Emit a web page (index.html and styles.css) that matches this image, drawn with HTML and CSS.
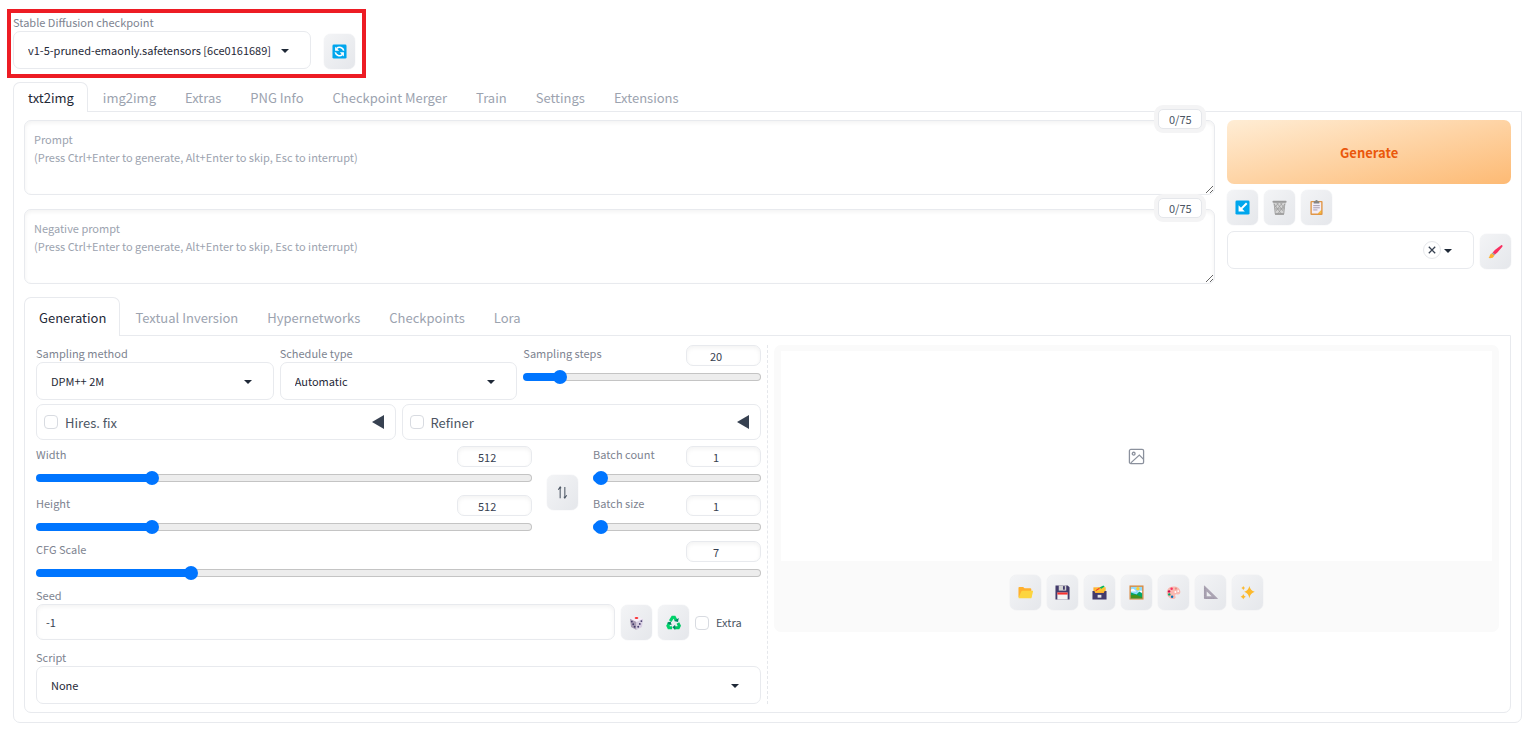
FILE: index.html
```html
<!DOCTYPE html>
<html lang="en">
<head>
    <meta charset="UTF-8">
    <meta name="viewport" content="width=device-width, initial-scale=1.0">
    <title>Stable Diffusion</title>
    <link rel="stylesheet" href="styles.css">
</head>
<body>
    <div class="quicksettings">
        <div class="field checkpoint">
            <label for="checkpoint">Stable Diffusion checkpoint</label>
            <div class="dropdown">
                <select id="checkpoint"><option>v1-5-pruned-emaonly.safetensors [6ce0161689]</option></select>
            </div>
        </div>
        <button class="tool" aria-label="Refresh">
            <svg viewBox="0 0 16 16"><rect x="0.5" y="0.5" width="15" height="15" rx="1.5" fill="#00a6ed"/><path d="M12.5 7A4.6 4.6 0 0 0 5 4.6M3.5 9a4.6 4.6 0 0 0 7.5 2.4" fill="none" stroke="#fff" stroke-width="1.7"/><path d="M3.3 2.8v4.4h4.4zM12.7 13.200V8.8H8.3z" fill="#fff"/></svg>
        </button>
    </div>

    <div class="app">
        <nav class="tabs">
            <button class="tab selected">txt2img</button>
            <button class="tab">img2img</button>
            <button class="tab">Extras</button>
            <button class="tab">PNG Info</button>
            <button class="tab">Checkpoint Merger</button>
            <button class="tab">Train</button>
            <button class="tab">Settings</button>
            <button class="tab">Extensions</button>
        </nav>

        <main class="panel">
            <div class="toprow">
                <div class="prompts">
                    <div class="prompt">
                        <textarea aria-label="Prompt" placeholder="Prompt&#10;(Press Ctrl+Enter to generate, Alt+Enter to skip, Esc to interrupt)"></textarea>
                        <span class="counter">0/75</span>
                    </div>
                    <div class="prompt">
                        <textarea aria-label="Negative prompt" placeholder="Negative prompt&#10;(Press Ctrl+Enter to generate, Alt+Enter to skip, Esc to interrupt)"></textarea>
                        <span class="counter">0/75</span>
                    </div>
                </div>
                <div class="actions">
                    <button class="generate">Generate</button>
                    <div class="tools">
                        <button class="tool" aria-label="Read generation parameters">
                            <svg viewBox="0 0 16 16"><rect x="0.5" y="0.5" width="15" height="15" rx="1.5" fill="#00a6ed"/><path d="M12.5 3.5L6 10" stroke="#fff" stroke-width="2.2"/><path d="M3.8 5.5v6.7h6.7z" fill="#fff"/></svg>
                        </button>
                        <button class="tool" aria-label="Clear prompt">
                            <svg viewBox="0 0 16 16"><path d="M1.5 2h13l-1.7 13.5H3.2z" fill="#d3d3d3"/><path d="M2 4l8 11M5 3l7 9M9 3l4 6M14 4L6 15M11 3l-7 9M7 3L3 8M2.3 4l1.2 11h9l1.2-11M3 9.5h10" fill="none" stroke="#9b9b9b" stroke-width="0.8"/><rect x="0.5" y="0.8" width="15" height="2.2" rx="0.8" fill="#9b9b9b"/><rect x="3.2" y="14" width="9.6" height="1.7" rx="0.6" fill="#9b9b9b"/></svg>
                        </button>
                        <button class="tool" aria-label="Apply style">
                            <svg viewBox="0 0 16 16"><rect x="1.5" y="1" width="13" height="15" rx="1" fill="#e19747"/><path d="M3 2.5h10V11l-3.500 3.500H3z" fill="#f3eef8"/><path d="M13 11v3.500H9.500z" fill="#f9c23c"/><path d="M4.500 6h7M4.500 8.300h7M4.500 10.600h4.500" stroke="#998ea4" stroke-width="0.9"/><path d="M5 1.300h1.700a1.300 1.300 0 0 1 2.600 0H11v2.500H5z" fill="#858585"/></svg>
                        </button>
                    </div>
                    <div class="styles-row">
                        <div class="dropdown">
                            <select aria-label="Styles"><option></option></select>
                            <button class="clear" aria-label="Clear styles"><svg viewBox="0 0 10 10"><path d="M1 1l8 8M9 1L1 9" stroke="#374151" stroke-width="1.6"/></svg></button>
                        </div>
                        <button class="tool" aria-label="Edit styles">
                            <svg viewBox="0 0 16 16"><path d="M14 1.200L7.300 6.500 5 9l2.500 2.200L10 9l5.500-6.300q.3-1.600-1.500-1.500z" fill="#f92f60"/><path d="M5 9l2.500 2.200-1 1.200-2.600-2.300z" fill="#9b9b9b"/><path d="M4 10l2.600 2.400c-.6 2.200-3 3-6 2.600 1.400-1 1-4.600 3.400-5z" fill="#ffb02e"/></svg>
                        </button>
                    </div>
                </div>
            </div>

            <nav class="tabs subtabs">
                <button class="tab selected">Generation</button>
                <button class="tab">Textual Inversion</button>
                <button class="tab">Hypernetworks</button>
                <button class="tab">Checkpoints</button>
                <button class="tab">Lora</button>
            </nav>

            <section class="panel generation">
                <div class="settings">
                    <div class="sampler">
                        <div class="field">
                            <label for="sampler">Sampling method</label>
                            <div class="dropdown"><select id="sampler"><option>DPM++ 2M</option></select></div>
                        </div>
                        <div class="field">
                            <label for="schedule">Schedule type</label>
                            <div class="dropdown"><select id="schedule"><option>Automatic</option></select></div>
                        </div>
                        <div class="slider">
                            <div class="head"><label for="steps">Sampling steps</label><input type="number" aria-label="Sampling steps value" value="20"></div>
                            <input type="range" id="steps" min="1" max="150" value="20" style="--value: 0.1275">
                        </div>
                    </div>

                    <div class="accordions">
                        <div class="accordion">
                            <input type="checkbox" id="hires"><label for="hires">Hires. fix</label>
                            <button aria-label="Expand Hires. fix"><svg viewBox="0 0 12 14"><path d="M12 0v14L0 7z" fill="#374151"/></svg></button>
                        </div>
                        <div class="accordion">
                            <input type="checkbox" id="refiner"><label for="refiner">Refiner</label>
                            <button aria-label="Expand Refiner"><svg viewBox="0 0 12 14"><path d="M12 0v14L0 7z" fill="#374151"/></svg></button>
                        </div>
                    </div>

                    <div class="dimensions">
                        <div class="sliders size">
                            <div class="slider">
                                <div class="head"><label for="width">Width</label><input type="number" aria-label="Width value" value="512"></div>
                                <input type="range" id="width" min="64" max="2048" value="512" style="--value: 0.2258">
                            </div>
                            <div class="slider">
                                <div class="head"><label for="height">Height</label><input type="number" aria-label="Height value" value="512"></div>
                                <input type="range" id="height" min="64" max="2048" value="512" style="--value: 0.2258">
                            </div>
                        </div>
                        <button class="tool" aria-label="Switch width and height">
                            <svg viewBox="0 0 16 16"><path d="M5.500 14V2.500M3.500 5l2-3 1 1.500M10.500 2v11.500M12.500 11l-2 3-1-1.500" fill="none" stroke="#4b5563" stroke-width="1.1"/></svg>
                        </button>
                        <div class="sliders batch">
                            <div class="slider">
                                <div class="head"><label for="count">Batch count</label><input type="number" aria-label="Batch count value" value="1"></div>
                                <input type="range" id="count" min="1" max="100" value="1" style="--value: 0">
                            </div>
                            <div class="slider">
                                <div class="head"><label for="batch">Batch size</label><input type="number" aria-label="Batch size value" value="1"></div>
                                <input type="range" id="batch" min="1" max="8" value="1" style="--value: 0">
                            </div>
                        </div>
                    </div>

                    <div class="slider cfg">
                        <div class="head"><label for="cfg">CFG Scale</label><input type="number" aria-label="CFG Scale value" value="7"></div>
                        <input type="range" id="cfg" min="1" max="30" value="7" style="--value: 0.2069">
                    </div>

                    <div class="seed-row">
                        <div class="field">
                            <label for="seed">Seed</label>
                            <input type="text" id="seed" value="-1">
                        </div>
                        <button class="tool" aria-label="Random seed">
                            <svg viewBox="0 0 16 16"><path d="M1 4l7-3 7 3-7 3.500z" fill="#f4eef8"/><path d="M1 4l7 3.500V16l-5.800-3.200z" fill="#a99bb3"/><path d="M15 4L8 7.500V16l5.800-3.200z" fill="#d9cfe3"/><ellipse cx="8" cy="3.2" rx="2" ry="1" fill="#f8312f"/><g fill="#433b6b"><circle cx="3" cy="7" r="1"/><circle cx="6" cy="12.5" r="1"/><circle cx="4.5" cy="9.8" r="1"/><circle cx="13.2" cy="6.5" r="1"/><circle cx="11.5" cy="9.5" r="1"/><circle cx="9.8" cy="12.5" r="1"/></g></svg>
                        </button>
                        <button class="tool" aria-label="Reuse seed">
                            <svg viewBox="0 0 16 16"><g fill="none" stroke-width="3.2"><path d="M4.500 6.500L7 2.500h2L11 6" stroke="#00d26a"/><path d="M12.700 8.500l1.500 3-1 2H9" stroke="#00c563"/><path d="M6.500 13.500H3l-1-2 2-3.500" stroke="#00d26a"/></g><path d="M8.500 6.500l4.300 1 .8-4.300z" fill="#008463"/><path d="M9.800 10.300v5.700L6.800 13z" fill="#008463"/><path d="M.8 8.500L5 6.800l1 4z" fill="#008463"/></svg>
                        </button>
                        <div class="extra"><input type="checkbox" id="extra"><label for="extra">Extra</label></div>
                    </div>

                    <div class="field script">
                        <label for="script">Script</label>
                        <div class="dropdown"><select id="script"><option>None</option></select></div>
                    </div>
                </div>

                <div class="divider"></div>

                <div class="results">
                    <div class="gallery">
                        <div class="preview">
                            <svg viewBox="0 0 24 24" fill="none" stroke="#8b919d" stroke-width="1.8"><rect x="2" y="2" width="20" height="20" rx="2"/><circle cx="8" cy="8" r="2"/><path d="M4 21L16 10l6 6"/></svg>
                        </div>
                        <div class="tools">
                            <button class="tool" aria-label="Open output directory">
                                <svg viewBox="0 0 16 16"><path d="M.5 3q0-1 1-1h4L7 3.500h6q1.200 0 1.200 1.200V13H.5z" fill="#ffb02e"/><path d="M5 6h10.500q.7 0 .5.800l-1.500 6.500q-.2.900-1.200.9H1.500q-1 0-.8-.8L3.500 7q.3-1 1.500-1z" fill="#fcd53f"/></svg>
                            </button>
                            <button class="tool" aria-label="Save image">
                                <svg viewBox="0 0 16 16"><path d="M.5.500h13l2 2v13H.5z" fill="#433b6b"/><path d="M4 .5h8V6H4z" fill="#d3d3d3"/><path d="M8.500 1.200h2V5h-2z" fill="#433b6b"/><path d="M2.500 8h11v7.500h-11z" fill="#f4f4f4"/><path d="M2.500 8h11v2.200h-11z" fill="#f8312f"/></svg>
                            </button>
                            <button class="tool" aria-label="Save zip archive">
                                <svg viewBox="0 0 16 16"><path d="M1.500 2.500h13V9h-13z" fill="#ffb02e"/><path d="M3 4l7-2.500 4 1.500v4H3z" fill="#fcc331"/><path d="M4 6l4-2.500" stroke="#f8312f" stroke-width="1.200"/><path d="M8 3l4-2.500 1.500 1L10 4z" fill="#00b864"/><path d="M.5 6.500h2l1 2h9l1-2h2v9H.5z" fill="#433b6b"/><path d="M6 10.500h4v3H6z" fill="#e6e6e6"/></svg>
                            </button>
                            <button class="tool" aria-label="Send to img2img">
                                <svg viewBox="0 0 16 16"><rect x="0.5" y="0.5" width="15" height="15" fill="#d98c45"/><rect x="2" y="2" width="12" height="12" fill="#8fdcff"/><circle cx="9.5" cy="4" r="1.8" fill="#ffcf2e"/><path d="M2 5q2-2 4 0l2 2H2zM11 6h3v2h-5z" fill="#fff"/><path d="M2 8l3 1 3 1 3-3 3 2v5H2z" fill="#00a66a"/><path d="M2 11l5-1 7 3v1H2z" fill="#44911b"/></svg>
                            </button>
                            <button class="tool" aria-label="Send to inpaint">
                                <svg viewBox="0 0 16 16"><path d="M8 1.500C3.500 1.500.8 4.500.8 8s3 7 7 7c2.500 0 3-1.700 2.200-3-.8-1.500.5-2.500 2-2 2 .5 3.500-.7 3.300-3C15 3.500 12 1.500 8 1.500z" fill="#f9b8b0"/><circle cx="10" cy="7.5" r="1" fill="#fff"/><circle cx="6" cy="4" r="1.300" fill="#f92f60"/><circle cx="3.300" cy="6.800" r="1.300" fill="#ca0b4a"/><circle cx="3.500" cy="10" r="1.300" fill="#00a66a"/><circle cx="6.500" cy="12.500" r="1.300" fill="#0074ba"/><circle cx="10.500" cy="3.800" r="1.200" fill="#e58d80"/><circle cx="13" cy="6.500" r="1" fill="#fff"/></svg>
                            </button>
                            <button class="tool" aria-label="Send to extras">
                                <svg viewBox="0 0 16 16"><path d="M1 .8q0-.8.800 0L15.500 14q.8 1-.3 1H1.800Q1 15 1 14.200zM4 7v5h5.300z" fill="#aba4b3" fill-rule="evenodd"/><path d="M2 3v11h11" fill="none" stroke="#8d8499" stroke-width="0.7" stroke-dasharray="1 1"/></svg>
                            </button>
                            <button class="tool" aria-label="Upscale">
                                <svg viewBox="0 0 16 16" fill="#fcb92c"><path d="M10 1q1 4.800 5.700 6.300Q11 8.700 10 14q-1-5.300-5.500-6.700Q9 5.800 10 1zM3.500 1q.4 1.700 2 2.300-1.600.5-2 2.200-.5-1.700-2-2.200Q3 2.700 3.500 1zM3.500 9.500q.5 2.200 2.700 2.900-2.200.6-2.700 2.900-.5-2.300-2.800-2.900Q3 11.700 3.500 9.500z"/></svg>
                            </button>
                        </div>
                    </div>
                </div>
            </section>
        </main>
    </div>
</body>
</html>
```
FILE: styles.css
```css
* {
    box-sizing: border-box;
}

body {
    margin: 0;
    padding: 9px 14px 8px 7px;
    background-color: #fff;
    color: #374151;
    font-family: "Noto Sans CJK SC", "Open Sans", sans-serif;
    font-size: 11px;
    line-height: 17px;
}

button, input, select, textarea {
    margin: 0;
    font: inherit;
    color: inherit;
}

button {
    padding: 0;
    border: none;
    background: none;
    cursor: pointer;
}

svg {
    display: block;
}

label {
    color: #7d8390;
}

.quicksettings {
    display: flex;
    align-items: flex-end;
    gap: 13px;
    width: fit-content;
    padding: 1px 7px 5px 2px;
    border: 4px solid #ed1c24;
}

.field {
    display: flex;
    flex-direction: column;
    min-width: 0;
}

.checkpoint {
    width: 298px;
}

.dropdown {
    position: relative;
}

.dropdown select {
    display: block;
    width: 100%;
    height: 38px;
    padding: 0 36px 0 14px;
    border: 1px solid #e8eaee;
    border-radius: 7px;
    background-color: #fff;
    appearance: none;
    color: #1f2937;
}

.checkpoint select {
    padding-right: 24px;
}

.dropdown::after {
    content: "";
    position: absolute;
    top: 18px;
    right: 22px;
    border: 4px solid transparent;
    border-top-color: #1f2937;
    border-bottom: none;
    pointer-events: none;
}

.tool {
    display: flex;
    flex: none;
    align-items: center;
    justify-content: center;
    width: 31px;
    height: 35px;
    border-radius: 7px;
    background: linear-gradient(to bottom right, #f3f4f6, #e5e7eb);
    box-shadow: 0 0 1px #d1d5db;
}

.tool svg {
    width: 15px;
    height: 15px;
}

.app {
    margin: 4px 0 0 6px;
}

.tabs {
    display: flex;
    position: relative;
    z-index: 1;
}

.tab {
    height: 30px;
    margin-bottom: -1px;
    padding: 0 13px 0 14px;
    border: 1px solid transparent;
    border-bottom: none;
    border-radius: 7px 7px 0 0;
    color: #9ca3af;
    font-size: 13px;
}

.tab.selected {
    border-color: #e8eaee;
    background-color: #fff;
    color: #1f2937;
}

.panel {
    padding: 8px 10px 9px;
    border: 1px solid #e8eaee;
    border-radius: 0 0 7px 7px;
}

.toprow {
    display: grid;
    grid-template-columns: 21fr 5fr;
    gap: 12px;
}

.prompts {
    display: flex;
    flex-direction: column;
    gap: 14px;
}

.prompt {
    position: relative;
}

.prompt textarea {
    display: block;
    width: 100%;
    height: 75px;
    padding: 9px;
    border: 1px solid #e8eaee;
    border-radius: 7px;
    box-shadow: inset 0 2px 4px rgba(0, 0, 0, 0.05);
    line-height: 18px;
    resize: vertical;
}

.prompt textarea::placeholder {
    color: #9ca3af;
}

.counter {
    position: absolute;
    top: -11px;
    right: 13px;
    width: 44px;
    border: 1px solid #e5e7eb;
    border-radius: 5px;
    background-color: #fff;
    box-shadow: 0 0 0 4px #f4f4f5;
    color: #4b5563;
    line-height: 18px;
    text-align: center;
}

.actions {
    display: flex;
    flex-direction: column;
    gap: 6px;
}

.generate {
    height: 64px;
    border-radius: 7px;
    background: linear-gradient(to bottom right, #ffedd5, #fdba74);
    color: #ea580c;
    font-size: 13px;
    font-weight: 600;
}

.tools {
    display: flex;
    gap: 6px;
}

.styles-row {
    display: flex;
    align-items: flex-end;
    gap: 6px;
}

.styles-row .dropdown {
    flex: 1;
}

.clear {
    display: flex;
    position: absolute;
    top: 10px;
    right: 33px;
    align-items: center;
    justify-content: center;
    width: 18px;
    height: 18px;
    border: 1px solid #e5e7eb;
    border-radius: 50%;
}

.clear svg {
    width: 8px;
    height: 8px;
}

.subtabs {
    margin-top: 13px;
}

.subtabs .tab {
    height: 39px;
}

.generation {
    display: flex;
    gap: 6px;
    padding: 9px 11px 8px;
}

.settings, .results {
    flex: 1;
    min-width: 0;
}

.divider {
    border-left: 1px dashed #e5e7eb;
}

.sampler {
    display: grid;
    grid-template-columns: 1fr 1fr 1fr;
    gap: 6px;
}

.slider .head {
    display: flex;
    justify-content: space-between;
}

.slider input[type="number"] {
    width: 75px;
    height: 21px;
    padding: 0 6px;
    border: 1px solid #e8eaee;
    border-radius: 7px;
    box-shadow: inset 0 2px 4px rgba(0, 0, 0, 0.05);
    text-align: center;
}

.slider input[type="range"] {
    display: block;
    width: 100%;
    height: 14px;
    margin-top: 4px;
    appearance: none;
    background: none;
}

.slider input[type="range"]::-webkit-slider-runnable-track {
    height: 8px;
    border: 1px solid transparent;
    border-radius: 4px;
    background:
        linear-gradient(#0075ff, #0075ff) 0 0 / calc(7px + (100% - 14px) * var(--value)) 100% no-repeat border-box,
        linear-gradient(#ededed, #ededed) padding-box,
        linear-gradient(#c4c4c4, #c4c4c4) border-box;
}

.slider input[type="range"]::-webkit-slider-thumb {
    width: 14px;
    height: 14px;
    margin-top: -4px;
    border-radius: 50%;
    background-color: #0075ff;
    appearance: none;
}

.accordions {
    display: grid;
    grid-template-columns: 1fr 1fr;
    gap: 6px;
    margin-top: 4px;
}

.accordion {
    display: flex;
    align-items: center;
    gap: 7px;
    height: 36px;
    padding: 0 11px 0 7px;
    border: 1px solid #e8eaee;
    border-radius: 7px;
}

.accordion label {
    flex: 1;
    color: #4b5563;
    font-size: 13px;
}

.accordion svg {
    width: 12px;
    height: 14px;
}

input[type="checkbox"] {
    width: 14px;
    height: 14px;
    border: 1px solid #d8dbe1;
    border-radius: 4px;
    background-color: #fff;
    appearance: none;
}

.dimensions {
    display: flex;
    align-items: center;
    gap: 15px;
    margin-top: 6px;
}

.dimensions .tool {
    margin-top: 4px;
}

.sliders {
    display: flex;
    flex-direction: column;
    gap: 10px;
}

.size {
    flex: 65;
}

.batch {
    flex: 22;
}

.cfg {
    margin-top: 7px;
}

.seed-row {
    display: flex;
    align-items: flex-end;
    gap: 6px;
    margin-top: 7px;
}

.seed-row .field {
    flex: 1;
}

#seed {
    height: 36px;
    padding: 0 9px;
    border: 1px solid #e8eaee;
    border-radius: 7px;
    box-shadow: inset 0 2px 4px rgba(0, 0, 0, 0.05);
}

.extra {
    display: flex;
    align-items: center;
    gap: 7px;
    width: 66px;
    height: 35px;
}

.extra label {
    color: #4b5563;
}

.script {
    margin-top: 9px;
}

.gallery {
    padding: 6px 7px 22px;
    border-radius: 7px;
    background-color: #fafafa;
}

.preview {
    display: flex;
    align-items: center;
    justify-content: center;
    height: 210px;
    background-color: #fff;
}

.preview svg {
    width: 17px;
    height: 17px;
}

.gallery .tools {
    justify-content: center;
    margin-top: 14px;
}
```
